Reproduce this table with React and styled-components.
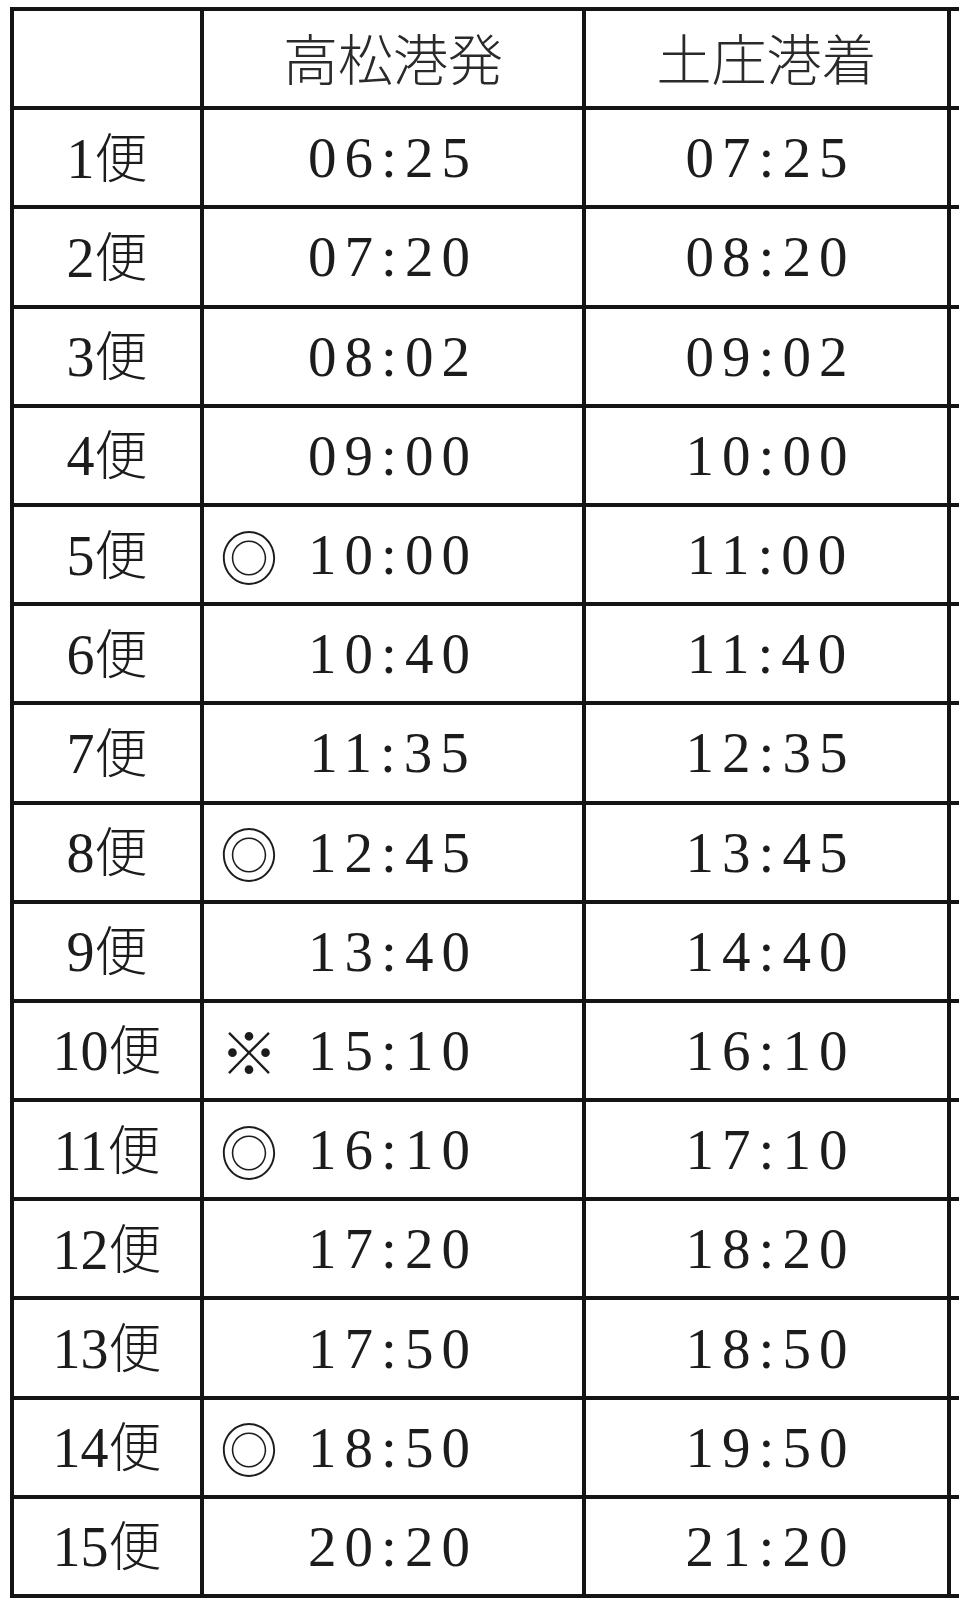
import React from 'react';
import styled, { createGlobalStyle } from 'styled-components';

const GlobalStyle = createGlobalStyle`
  html, body {
    margin: 0;
    padding: 0;
    background: #fff;
    overflow: hidden;
  }
`;

const Page = styled.div`
  width: 959px;
  height: 1610px;
  overflow: hidden;
  padding: 7px 0 0 10px;
  box-sizing: border-box;
`;

const Table = styled.table`
  border-collapse: collapse;
  table-layout: fixed;
  width: 1300px;
  color: #1c1c1c;
  font-family: "Liberation Serif", "Noto Sans CJK JP", serif;
`;

const Row = styled.tr`
  height: 99.2px;
`;

const Cell = styled.td`
  border: 4px solid #141414;
  padding: 0;
  text-align: center;
  vertical-align: middle;
  font-size: 55px;
  line-height: 1;
`;

const HeadText = styled.span`
  font-family: "Noto Sans CJK JP", sans-serif;
  font-weight: 300;
  font-size: 55px;
  color: #2a2a2a;
`;

const Label = styled.span`
  font-family: "Liberation Serif", serif;
  font-size: 56px;
  .kanji {
    font-family: "Noto Sans CJK JP", sans-serif;
    font-weight: 300;
    font-size: 53px;
  }
`;

const TimeBox = styled.div`
  display: grid;
  grid-template-columns: 1fr auto 1fr;
  align-items: center;
`;

const Mark = styled.span`
  justify-self: start;
  padding-left: ${p => p.$pad}px;
  font-family: "Noto Sans CJK JP", sans-serif;
  font-weight: 300;
  font-size: 58px;
  line-height: 1;
`;

const Time = styled.span`
  font-family: "Liberation Serif", serif;
  letter-spacing: 8px;
  padding-left: ${p => p.$shift || 0}px;
  font-size: 57px;
`;

const rows = [
  ['1', '', '06:25', '07:25'],
  ['2', '', '07:20', '08:20'],
  ['3', '', '08:02', '09:02'],
  ['4', '', '09:00', '10:00'],
  ['5', '◎', '10:00', '11:00'],
  ['6', '', '10:40', '11:40'],
  ['7', '', '11:35', '12:35'],
  ['8', '◎', '12:45', '13:45'],
  ['9', '', '13:40', '14:40'],
  ['10', '※', '15:10', '16:10'],
  ['11', '◎', '16:10', '17:10'],
  ['12', '', '17:20', '18:20'],
  ['13', '', '17:50', '18:50'],
  ['14', '◎', '18:50', '19:50'],
  ['15', '', '20:20', '21:20'],
];

export default function App() {
  return (
    <Page>
      <GlobalStyle />
      <Table>
        <colgroup>
          <col style={{ width: 190 }} />
          <col style={{ width: 382 }} />
          <col style={{ width: 365 }} />
          <col style={{ width: 363 }} />
        </colgroup>
        <tbody>
          <Row>
            <Cell />
            <Cell><HeadText>高松港発</HeadText></Cell>
            <Cell><HeadText>土庄港着</HeadText></Cell>
            <Cell />
          </Row>
          {rows.map(([no, mark, dep, arr]) => (
            <Row key={no}>
              <Cell>
                <Label>{no}<span className="kanji">便</span></Label>
              </Cell>
              <Cell>
                <TimeBox>
                  <Mark $pad={16}>{mark}</Mark>
                  <Time>{dep}</Time>
                  <span />
                </TimeBox>
              </Cell>
              <Cell>
                <Time $shift={8}>{arr}</Time>
              </Cell>
              <Cell />
            </Row>
          ))}
        </tbody>
      </Table>
    </Page>
  );
}
